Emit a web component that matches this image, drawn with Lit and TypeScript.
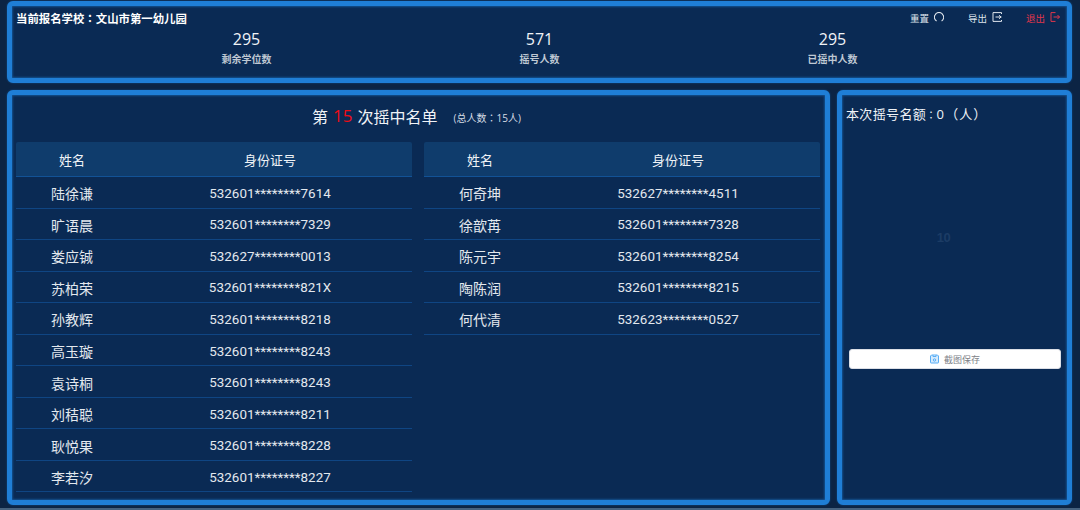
import { LitElement, html, css, svg } from "lit";
import { customElement } from "lit/decorators.js";

const left = [
  ["陆徐谦", "532601********7614"],
  ["旷语晨", "532601********7329"],
  ["娄应铖", "532627********0013"],
  ["苏柏荣", "532601********821X"],
  ["孙教辉", "532601********8218"],
  ["高玉璇", "532601********8243"],
  ["袁诗桐", "532601********8243"],
  ["刘秸聪", "532601********8211"],
  ["耿悦果", "532601********8228"],
  ["李若汐", "532601********8227"],
];
const right = [
  ["何奇坤", "532627********4511"],
  ["徐歆苒", "532601********7328"],
  ["陈元宇", "532601********8254"],
  ["陶陈润", "532601********8215"],
  ["何代清", "532623********0527"],
];

@customElement("app-root")
export class AppRoot extends LitElement {
  static styles = css`
    :host {
      display: flex;
      flex-direction: column;
      gap: 7px;
      width: 1080px;
      height: 510px;
      box-sizing: border-box;
      padding: 1px 8px 5px 7px;
      background: linear-gradient(#0c2444 calc(100% - 2px), #46627f 0);
      font-family: "Open Sans", "Noto Sans CJK SC", sans-serif;
      color: #e8edf3;
      overflow: hidden;
    }
    .tc {
      font-family: "Noto Sans CJK TC", sans-serif;
    }
    .panel {
      box-sizing: border-box;
      background: #0a2a54;
      border: 5px solid #1f7ed6;
      border-radius: 6px;
      box-shadow: inset 0 0 2px 1px #14508f, 0 0 2px #14508f;
    }
    .top {
      height: 82px;
      padding: 2px 4px 0;
      display: flex;
      flex-direction: column;
      flex: none;
    }
    .top-head {
      display: flex;
      justify-content: space-between;
      align-items: center;
      height: 20px;
    }
    .school {
      font-size: 11.4px;
      font-weight: 700;
      color: #fff;
    }
    .actions {
      display: flex;
      align-items: center;
      gap: 24px;
      padding-right: 3px;
    }
    .action {
      display: flex;
      align-items: center;
      gap: 5px;
      font-size: 9.5px;
      color: #dfe5ec;
    }
    .action svg {
      width: 10px;
      height: 10px;
      margin-top: -3px;
      display: block;
    }
    .action.exit {
      color: #e0364b;
    }
    .stats {
      display: grid;
      grid-template-columns: repeat(3, 293px);
      padding-left: 84px;
    }
    .stat {
      text-align: center;
    }
    .num {
      font-size: 16px;
      line-height: 22px;
      color: #f0f3f7;
    }
    .label {
      font-size: 10px;
      font-weight: 700;
      line-height: 18px;
      color: #bfc8d3;
    }
    .bottom {
      flex: 1;
      display: flex;
      gap: 7px;
      min-height: 0;
    }
    .main {
      width: 823px;
      flex: none;
      padding: 0 4px;
    }
    .title {
      height: 41px;
      margin-bottom: 6px;
      display: flex;
      align-items: center;
      justify-content: center;
      font-size: 16px;
      color: #f0f3f7;
      box-sizing: border-box;
      padding-right: 4px;
    }
    .title b {
      font-weight: 400;
      color: #f00c14;
      margin: 0 5px;
      font-size: 17px;
    }
    .title small {
      font-size: 10px;
      color: #d5dce4;
      margin-left: 16px;
      margin-top: 3px;
    }
    .tables {
      display: grid;
      grid-template-columns: 396px 396px;
      gap: 12px;
    }
    .row {
      display: grid;
      grid-template-columns: 112px 284px;
      height: 31.55px;
      align-items: center;
      text-align: center;
      font-size: 14px;
      color: #e3e8ee;
      border-bottom: 1px solid #0f4583;
      box-sizing: border-box;
    }
    .row span {
      position: relative;
      top: 1px;
    }
    .row.head {
      height: 35px;
      font-size: 13px;
      background: #0f3c6c;
      color: #f0f3f7;
      border-bottom: 1px solid #125296;
      border-radius: 2px 2px 0 0;
    }
    .row.head span {
      top: 0;
    }
    .id {
      font-family: Roboto, "Noto Sans CJK SC", sans-serif;
      font-size: 13.4px;
    }
    .row.head .id {
      font-family: inherit;
      font-size: 13px;
    }
    .side {
      flex: 1;
      padding: 5px 6px 0 4px;
      display: flex;
      flex-direction: column;
    }
    .quota {
      font-size: 13px;
      line-height: 28px;
      height: 28px;
      color: #f0f3f7;
      letter-spacing: 0.35px;
    }
    .colon {
      font-size: 10px;
    }
    .paren {
      margin-left: 1px;
      letter-spacing: 1px;
    }
    .ghost {
      font-family: "Liberation Sans", sans-serif;
      font-weight: 700;
      font-size: 13px;
      line-height: 14px;
      height: 14px;
      color: #1c3c65;
      text-align: center;
      margin-top: 103px;
      padding-right: 20px;
      letter-spacing: -0.5px;
    }
    .save {
      margin: 104px 0 0 3px;
      width: 212px;
      height: 20px;
      box-sizing: border-box;
      background: #fff;
      border: 1px solid #dcdfe6;
      border-radius: 3px;
      display: flex;
      align-items: center;
      justify-content: center;
      gap: 5px;
      font-size: 9px;
      font-family: inherit;
      color: #7d8288;
      padding: 0;
    }
    .save svg {
      width: 9px;
      height: 10px;
      margin-top: -1px;
    }
  `;

  private table(rows: string[][]) {
    return html`<div>
      <div class="row head"><span>姓名</span><span class="id">身份证号</span></div>
      ${rows.map(
        ([n, id]) => html`<div class="row"><span>${n}</span><span class="id">${id}</span></div>`
      )}
    </div>`;
  }

  render() {
    return html`
      <section class="panel top">
        <div class="top-head">
          <div class="school">当前报名学校<span class="tc">：</span>文山市第一幼儿园</div>
          <div class="actions">
            <div class="action">
              重置
              <svg viewBox="0 0 10 10" fill="none" stroke="currentColor" stroke-width="1.1">
                ${svg`<path d="M2.6 9A4.3 4.3 0 0 1 1 3 4.4 4.4 0 0 1 9 3 4.3 4.3 0 0 1 7.6 9" />`}
              </svg>
            </div>
            <div class="action">
              导出
              <svg viewBox="0 0 10 10" fill="none" stroke="currentColor" stroke-width="1">
                ${svg`<path d="M9.5 2V.6H1v8.8h8.5V8M3.5 5h6M7 3.2 9 5 7 6.8" />`}
              </svg>
            </div>
            <div class="action exit">
              退出
              <svg viewBox="0 0 10 10" fill="none" stroke="currentColor" stroke-width="1">
                ${svg`<path d="M5.5.6H1v8.8h4.5M3.5 5h6M7.5 3l2 2-2 2" />`}
              </svg>
            </div>
          </div>
        </div>
        <div class="stats">
          <div class="stat"><div class="num">295</div><div class="label">剩余学位数</div></div>
          <div class="stat"><div class="num">571</div><div class="label">摇号人数</div></div>
          <div class="stat"><div class="num">295</div><div class="label">已摇中人数</div></div>
        </div>
      </section>
      <div class="bottom">
        <section class="panel main">
          <div class="title">第<b>15</b>次摇中名单<small>(总人数<span class="tc">：</span>15人)</small></div>
          <div class="tables">${this.table(left)}${this.table(right)}</div>
        </section>
        <section class="panel side">
          <div class="quota">本次摇号名额<span class="tc colon">：</span>0<span class="tc paren">（人）</span></div>
          <div class="ghost">10</div>
          <button class="save">
            <svg viewBox="0 0 9 10" fill="#d6ebfd" stroke="#5aaef5" stroke-width="1">
              ${svg`<path d="M1.5 1h6l1 1v6.5a.5.5 0 0 1-.5.5H1a.5.5 0 0 1-.5-.5V2zM3 1v1.5h3V1" /><circle cx="4.5" cy="6" r="1.2" />`}
            </svg>
            截图保存
          </button>
        </section>
      </div>
    `;
  }
}
